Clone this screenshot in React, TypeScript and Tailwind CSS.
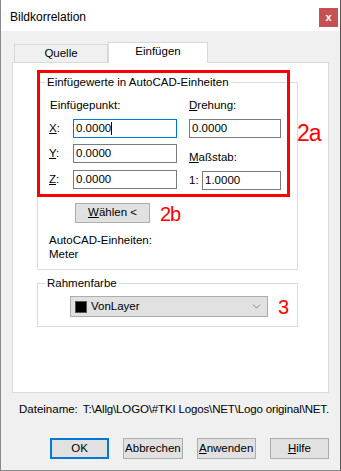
import { ChevronDown } from "lucide-react";

const font = { fontFamily: '"Segoe UI", "Liberation Sans", Arial, sans-serif' };
const redFont = { fontFamily: '"Liberation Sans", Arial, sans-serif' };

function Field({ value, focused, width }: { value: string; focused?: boolean; width: string }) {
  return (
    <div
      className={`h-[19px] ${width} bg-white border flex items-center pl-[2px] text-black ${
        focused ? "border-[#0078d7]" : "border-[#7a7a7a]"
      }`}
    >
      {value}
      {focused && <span className="w-px h-[13px] bg-black" />}
    </div>
  );
}

function Btn({ children, focused }: { children: React.ReactNode; focused?: boolean }) {
  return (
    <div
      className={`w-[60px] h-[21px] flex items-center justify-center bg-[#e1e1e1] text-black ${
        focused ? "border-2 border-[#0078d7]" : "border border-[#adadad]"
      }`}
    >
      {children}
    </div>
  );
}

export default function App() {
  return (
    <div
      className="relative w-[341px] h-[471px] bg-[#f0f0f0] border-l border-r border-b border-[#8a8a8a] border-r-[#555] flex flex-col text-[11.5px] text-black"
      style={font}
    >
      {/* title bar */}
      <div className="h-[31px] bg-white flex items-center justify-between pl-[9px] pr-[2px]">
        <span className="text-[12px] mt-[2px]">Bildkorrelation</span>
        <div className="w-[19px] h-[19px] mt-[4px] bg-[#c75050] flex items-center justify-center text-white text-[11px] font-bold leading-none">
          x
        </div>
      </div>

      <div className="flex-1 flex flex-col pt-[11px] px-[11px]">
        {/* tabs */}
        <div className="flex items-end h-[20px] pl-[2px] relative z-10">
          <div className="w-[94px] h-[18px] border border-b-0 border-[#d9d9d9] bg-[#f0f0f0] flex items-center justify-center">
            Quelle
          </div>
          <div className="w-[100px] h-[21px] -mb-px border border-b-0 border-[#d9d9d9] bg-white flex items-center justify-center pb-[2px]">
            Einfügen
          </div>
        </div>

        {/* tab panel */}
        <div className="w-[317px] h-[331px] bg-white border border-[#d9d9d9] pl-[24px] pt-[19px]">
          {/* group 1 */}
          <div className="relative w-[261px] h-[188px] border border-[#dcdcdc] pl-[11px] pt-[14px]">
            <span className="absolute -top-[9px] left-[7px] bg-white px-[2px] leading-[16px]">
              Einfügewerte in AutoCAD-Einheiten
            </span>
            <div className="flex">
              <div className="w-[140px] flex flex-col">
                <div className="h-[16px] leading-[16px] pl-px">Einfügepunkt:</div>
                <div className="flex flex-col gap-[6px] mt-[6px]">
                  <div className="flex items-center">
                    <span className="w-[24px]"><u>X</u>:</span>
                    <Field value="0.0000" focused width="w-[104px]" />
                  </div>
                  <div className="flex items-center">
                    <span className="w-[24px]"><u>Y</u>:</span>
                    <Field value="0.0000" width="w-[104px]" />
                  </div>
                  <div className="flex items-center mt-px">
                    <span className="w-[24px]"><u>Z</u>:</span>
                    <Field value="0.0000" width="w-[104px]" />
                  </div>
                </div>
              </div>
              <div className="flex flex-col">
                <div className="h-[16px] leading-[16px]"><u>D</u>rehung:</div>
                <div className="mt-[6px]">
                  <Field value="0.0000" width="w-[92px]" />
                </div>
                <div className="h-[16px] leading-[16px] mt-[11px]"><u>M</u>aßstab:</div>
                <div className="flex items-center mt-[6px]">
                  <span className="w-[13px]">1:</span>
                  <Field value="1.0000" width="w-[79px]" />
                </div>
              </div>
            </div>
            <div className="ml-[26px] mt-[13px] w-[75px] h-[20px] bg-[#e1e1e1] border border-[#adadad] flex items-center justify-center">
              <span><u>W</u>ählen &lt;</span>
            </div>
            <div className="mt-[10px] leading-[14px]">AutoCAD-Einheiten:</div>
            <div className="leading-[14px]">Meter</div>
          </div>

          {/* group 2 */}
          <div className="relative w-[261px] h-[44px] mt-[13px] border border-[#dcdcdc] pl-[32px] pt-[12px]">
            <span className="absolute -top-[9px] left-[7px] bg-white px-[2px] leading-[16px]">Rahmenfarbe</span>
            <div className="w-[198px] h-[21px] bg-[#e1e1e1] border border-[#adadad] flex items-center pl-[4px] pr-[4px]">
              <span className="w-[12px] h-[12px] bg-black border border-[#555]" />
              <span className="ml-[4px] flex-1">VonLayer</span>
              <ChevronDown size={13} strokeWidth={1.2} className="text-[#555]" />
            </div>
          </div>
        </div>

        {/* filename */}
        <div className="flex items-center mt-[9px] pl-[7px] h-[16px] whitespace-nowrap">
          <span className="w-[64px]">Dateiname:</span>
          <span className="tracking-[-0.15px]">T:\Allg\LOGO\#TKI Logos\NET\Logo original\NET.</span>
        </div>

        {/* buttons */}
        <div className="flex gap-[14px] mt-[20px] pl-[38px]">
          <Btn focused>OK</Btn>
          <Btn>Abbrechen</Btn>
          <Btn><span><u>A</u>nwenden</span></Btn>
          <Btn><span><u>H</u>ilfe</span></Btn>
        </div>
      </div>

      {/* annotations */}
      <div className="absolute left-[36px] top-[70px] w-[253px] h-[127px] border-[3px] border-[#ff0000]" />
      <span className="absolute left-[296px] top-[119px] text-[23px] leading-[28px] text-[#ff0000] tracking-[-1px]" style={redFont}>
        2a
      </span>
      <span className="absolute left-[159px] top-[201px] text-[20px] leading-[26px] text-[#ff0000] tracking-[-1px]" style={redFont}>
        2b
      </span>
      <span className="absolute left-[277px] top-[294px] text-[20px] leading-[26px] text-[#ff0000]" style={redFont}>
        3
      </span>
    </div>
  );
}
